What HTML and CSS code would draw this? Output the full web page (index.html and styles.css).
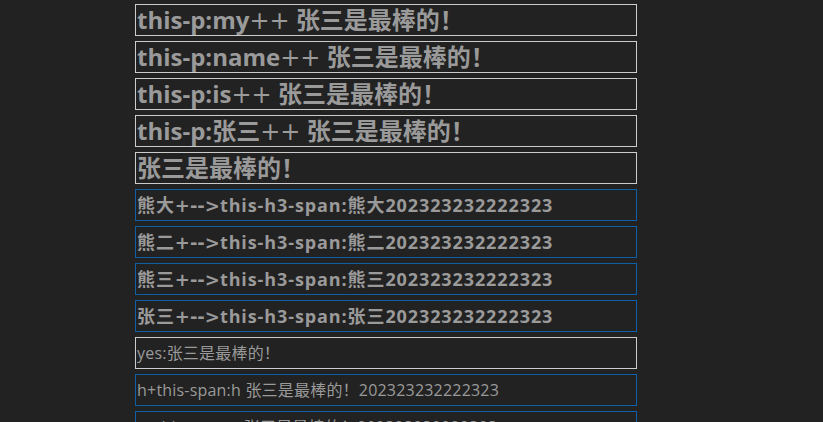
FILE: index.html
```html
<!DOCTYPE html>
<html lang="zh">
<head>
<meta charset="utf-8">
<link rel="stylesheet" href="styles.css">
</head>
<body>
<div class="list">
  <p class="box big">this-p:my<span class="sym">++</span> 张三是最棒的！</p>
  <p class="box big">this-p:name<span class="sym">++</span> 张三是最棒的！</p>
  <p class="box big">this-p:is<span class="sym">++</span> 张三是最棒的！</p>
  <p class="box big">this-p:张三<span class="sym">++</span> 张三是最棒的！</p>
  <p class="box big">张三是最棒的！</p>
  <h3 class="box mid">熊大<span class="sym">+--&gt;</span><span>this-h3-span:熊大202323232222323</span></h3>
  <h3 class="box mid">熊二<span class="sym">+--&gt;</span><span>this-h3-span:熊二202323232222323</span></h3>
  <h3 class="box mid">熊三<span class="sym">+--&gt;</span><span>this-h3-span:熊三202323232222323</span></h3>
  <h3 class="box mid">张三<span class="sym">+--&gt;</span><span>this-h3-span:张三202323232222323</span></h3>
  <div class="box small">yes:张三是最棒的！</div>
  <div class="box small blue">h+<span>this-span:h 张三是最棒的！202323232222323</span></div>
  <div class="box small blue">e+<span>this-span:e 张三是最棒的！202323232222323</span></div>
</div>
</body>
</html>
```
FILE: styles.css
```css
html, body {
  margin: 0;
  background: #222222;
}
body {
  font-family: "Open Sans", "Noto Sans CJK SC", sans-serif;
  color: #9a9a9a;
}
.list {
  width: 502px;
  padding: 4px 0 0 135px;
  display: flex;
  flex-direction: column;
  gap: 5px;
}
.box {
  margin: 0;
  height: 30px;
  line-height: 30px;
  border: 1px solid #cccccc;
  white-space: nowrap;
  overflow: hidden;
  padding-left: 1px;
}
.sym {
  font-family: "DejaVu Sans", sans-serif;
  font-weight: normal;
  letter-spacing: 0;
}
.big {
  font-size: 24px;
  font-weight: bold;
}
.big .sym {
  font-size: 24px;
}
.mid {
  font-size: 18px;
  font-weight: bold;
  letter-spacing: 0.9px;
  border-color: #0f5fa6;
}
.mid .sym {
  font-weight: bold;
  letter-spacing: 0;
}
.small {
  font-size: 16px;
  font-weight: normal;
  letter-spacing: 0.2px;
}
.blue {
  border-color: #0f5fa6;
}
```
